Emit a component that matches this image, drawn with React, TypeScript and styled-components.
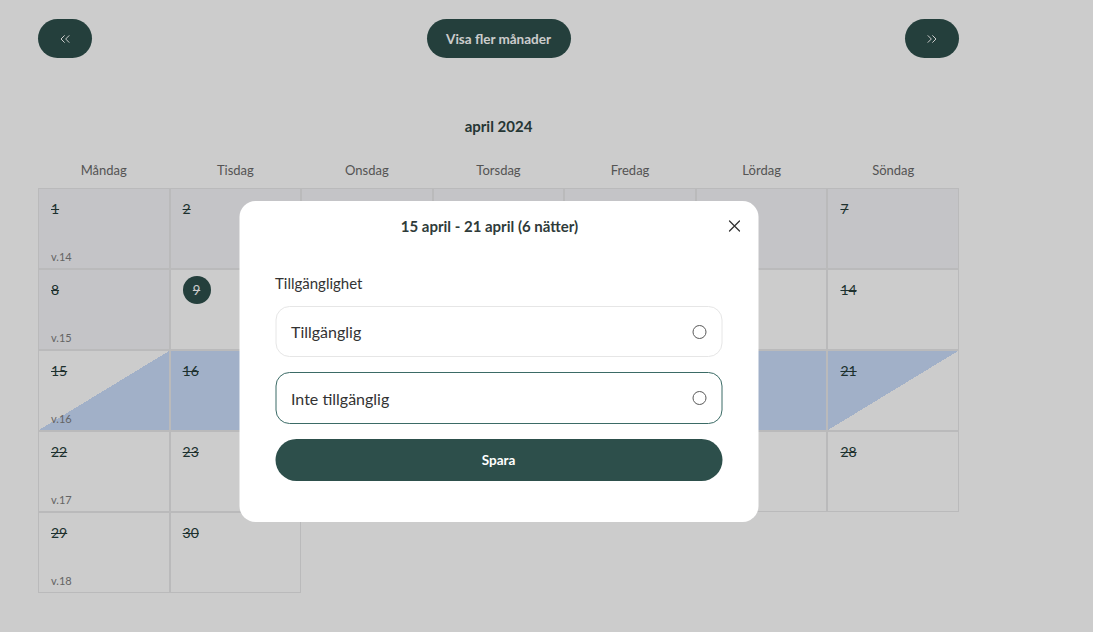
import React from "react";
import styled, { createGlobalStyle, css } from "styled-components";
import { ChevronsLeft, ChevronsRight } from "lucide-react";

const GlobalStyle = createGlobalStyle`
  * { box-sizing: border-box; }
  body {
    margin: 0;
    background: #ffffff;
    font-family: Lato, "Noto Sans", "Liberation Sans", sans-serif;
    color: #2f4442;
  }
  button { font-family: inherit; }
`;

const brand = "#2d4f4b";

const Page = styled.div`
  width: 921px;
  margin-left: 38px;
  padding-top: 19px;
`;

const TopBar = styled.div`
  display: flex;
  justify-content: space-between;
  align-items: center;
`;

const PillButton = styled.button<{ $wide?: boolean }>`
  height: 39px;
  width: ${(p) => (p.$wide ? "144px" : "54px")};
  border: none;
  border-radius: 20px;
  background: ${brand};
  color: #ffffff;
  font-size: 13.5px;
  font-weight: 700;
  display: flex;
  align-items: center;
  justify-content: center;
  padding: 0;
`;

const MonthSection = styled.section`
  position: relative;
  margin-top: 58px;
`;

const MonthTitle = styled.h2`
  margin: 0 0 16px;
  text-align: center;
  font-size: 15px;
  line-height: 20px;
  font-weight: 700;
  color: #2f4442;
`;

const WeekdayRow = styled.div`
  display: grid;
  grid-template-columns: repeat(7, 1fr);
  height: 36px;
  align-items: center;
`;

const Weekday = styled.div`
  text-align: center;
  font-size: 13px;
  color: #6a6a6a;
`;

const Grid = styled.div`
  display: grid;
  grid-template-columns: repeat(7, 1fr);
  grid-auto-rows: 81px;
`;

type Range = "none" | "start" | "mid" | "end";

const rangeBlue = "#cadcfb";

const Cell = styled.div<{ $past?: boolean; $range: Range }>`
  border: 1px solid #e9e9ea;
  padding: 6px 12px 4px;
  display: flex;
  flex-direction: column;
  justify-content: space-between;
  background: ${(p) => (p.$past ? "#f5f6f9" : "#ffffff")};
  ${(p) =>
    p.$range === "mid" &&
    css`
      background: ${rangeBlue};
    `}
  ${(p) =>
    p.$range === "start" &&
    css`
      background: linear-gradient(to bottom right, #ffffff 50%, ${rangeBlue} 50%);
    `}
  ${(p) =>
    p.$range === "end" &&
    css`
      background: linear-gradient(to bottom right, ${rangeBlue} 50%, #ffffff 50%);
    `}
`;

const DayNumber = styled.span<{ $today?: boolean }>`
  align-self: flex-start;
  height: 28px;
  line-height: 28px;
  font-size: 14px;
  color: #263d3a;
  text-decoration: line-through;
  ${(p) =>
    p.$today &&
    css`
      width: 28px;
      border-radius: 50%;
      background: ${brand};
      color: #ffffff;
      text-align: center;
      font-size: 13px;
    `}
`;

const WeekLabel = styled.span`
  font-size: 11px;
  line-height: 14px;
  color: #7d7d7d;
`;

const Backdrop = styled.div`
  position: fixed;
  inset: 0;
  background: rgba(0, 0, 0, 0.2);
  z-index: 10;
`;

const Modal = styled.div`
  position: absolute;
  top: 85px;
  left: 50%;
  transform: translateX(-50%);
  width: 519px;
  background: #ffffff;
  border-radius: 16px;
  padding: 0 36px 41px;
  z-index: 20;
`;

const ModalHeader = styled.div`
  display: flex;
  align-items: center;
  height: 50px;
  margin: 0 -24px 0 -18px;
`;

const ModalTitle = styled.h3`
  flex: 1;
  margin: 0;
  text-align: center;
  font-size: 15px;
  font-weight: 700;
  color: #2f3b3a;
`;

const CloseButton = styled.button`
  width: 24px;
  height: 24px;
  border: none;
  background: transparent;
  padding: 0;
  display: flex;
  align-items: center;
  justify-content: center;
  color: #333333;
`;

const FieldLabel = styled.div`
  margin-top: 22px;
  font-size: 15px;
  line-height: 20px;
  color: #333333;
`;

const Options = styled.div`
  display: flex;
  flex-direction: column;
  gap: 15px;
  margin-top: 13px;
`;

const Option = styled.label<{ $focused?: boolean }>`
  display: flex;
  align-items: center;
  justify-content: space-between;
  height: ${(p) => (p.$focused ? "52px" : "51px")};
  padding: 0 15px;
  border: 1px solid ${(p) => (p.$focused ? "#3b6b66" : "#e6e6e6")};
  border-radius: 14px;
  font-size: 16px;
  color: #333333;
`;

const Radio = styled.span`
  width: 14px;
  height: 14px;
  border-radius: 50%;
  border: 1.2px solid #5a5a5a;
`;

const SaveButton = styled.button`
  margin-top: 15px;
  width: 100%;
  height: 42px;
  border: none;
  border-radius: 21px;
  background: ${brand};
  color: #ffffff;
  font-size: 13.5px;
  font-weight: 700;
`;

const weekdays = ["Måndag", "Tisdag", "Onsdag", "Torsdag", "Fredag", "Lördag", "Söndag"];

const TODAY = 9;
const RANGE_START = 15;
const RANGE_END = 21;

function rangeOf(day: number): Range {
  if (day === RANGE_START) return "start";
  if (day === RANGE_END) return "end";
  if (day > RANGE_START && day < RANGE_END) return "mid";
  return "none";
}

export default function App() {
  const days = Array.from({ length: 30 }, (_, i) => i + 1);

  return (
    <>
      <GlobalStyle />
      <Page>
        <TopBar>
          <PillButton aria-label="Föregående">
            <ChevronsLeft size={16} strokeWidth={1.5} />
          </PillButton>
          <PillButton $wide>Visa fler månader</PillButton>
          <PillButton aria-label="Nästa">
            <ChevronsRight size={16} strokeWidth={1.5} />
          </PillButton>
        </TopBar>

        <MonthSection>
          <MonthTitle>april 2024</MonthTitle>
          <WeekdayRow>
            {weekdays.map((d) => (
              <Weekday key={d}>{d}</Weekday>
            ))}
          </WeekdayRow>
          <Grid>
            {days.map((day) => (
              <Cell key={day} $past={day < TODAY} $range={rangeOf(day)}>
                <DayNumber $today={day === TODAY}>{day}</DayNumber>
                {(day - 1) % 7 === 0 && <WeekLabel>v.{14 + (day - 1) / 7}</WeekLabel>}
              </Cell>
            ))}
          </Grid>

          <Modal role="dialog">
            <ModalHeader>
              <ModalTitle>15 april - 21 april (6 nätter)</ModalTitle>
              <CloseButton aria-label="Stäng">
                <svg width="12" height="12" viewBox="0 0 12 12" fill="none">
                  <path d="M1 1L11 11M11 1L1 11" stroke="currentColor" strokeWidth="1.3" strokeLinecap="round" />
                </svg>
              </CloseButton>
            </ModalHeader>
            <FieldLabel>Tillgänglighet</FieldLabel>
            <Options>
              <Option>
                Tillgänglig
                <Radio />
              </Option>
              <Option $focused>
                Inte tillgänglig
                <Radio />
              </Option>
            </Options>
            <SaveButton>Spara</SaveButton>
          </Modal>
        </MonthSection>
      </Page>
      <Backdrop />
    </>
  );
}
